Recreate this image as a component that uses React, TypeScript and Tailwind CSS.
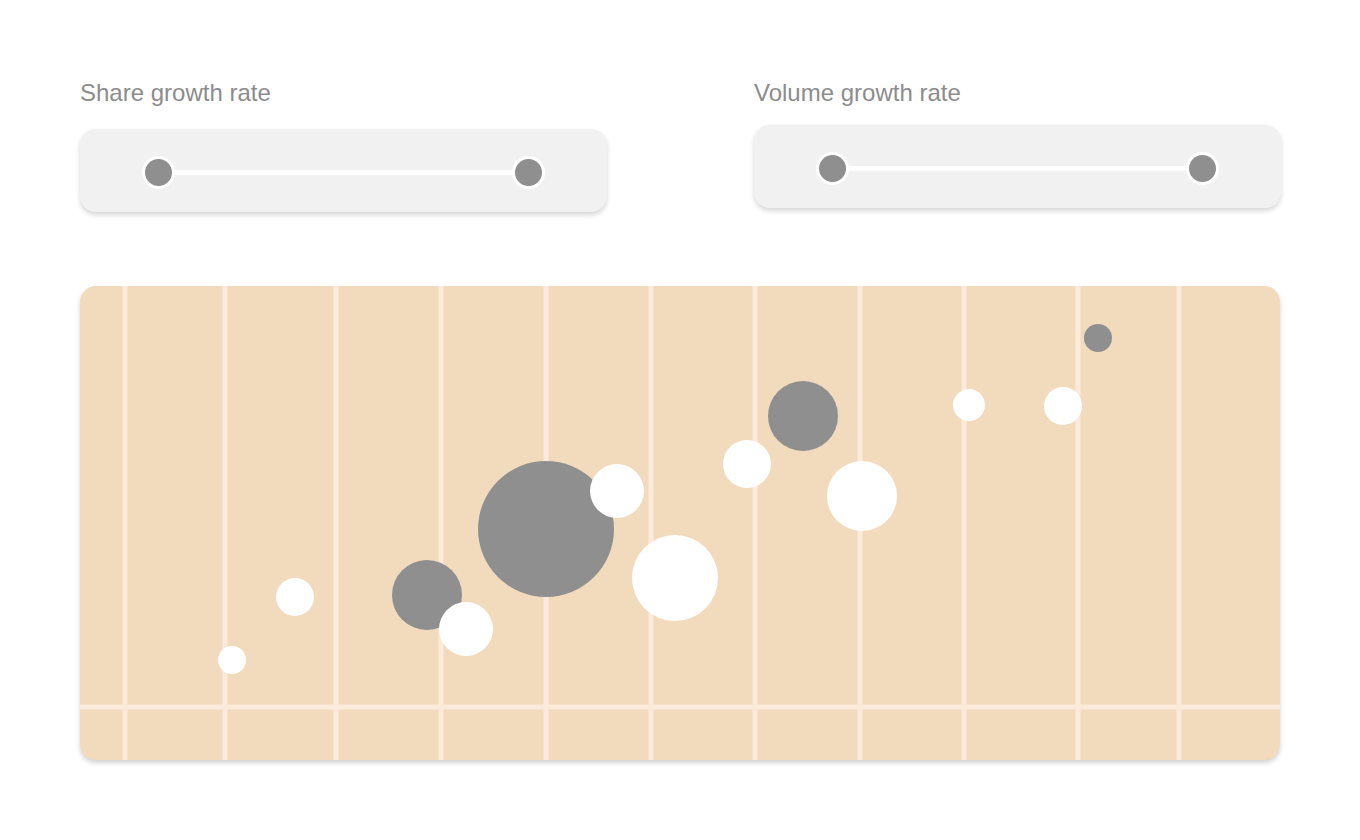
import React from "react";

const circles: { x: number; y: number; r: number; c: "g" | "w" }[] = [
  { x: 232, y: 660, r: 14, c: "w" },
  { x: 295, y: 597, r: 19, c: "w" },
  { x: 427, y: 595, r: 35, c: "g" },
  { x: 466, y: 629, r: 27, c: "w" },
  { x: 546, y: 529, r: 68, c: "g" },
  { x: 617, y: 491, r: 27, c: "w" },
  { x: 675, y: 578, r: 43, c: "w" },
  { x: 747, y: 464, r: 24, c: "w" },
  { x: 803, y: 416, r: 35, c: "g" },
  { x: 862, y: 496, r: 35, c: "w" },
  { x: 969, y: 405, r: 16, c: "w" },
  { x: 1063, y: 406, r: 19, c: "w" },
  { x: 1098, y: 338, r: 14, c: "g" },
];

const vLines = [125, 225, 336, 441, 546, 651, 755, 860, 964, 1078, 1179];

function Knob() {
  return (
    <div className="w-[33px] h-[33px] rounded-full bg-white flex items-center justify-center shrink-0">
      <div className="w-[27px] h-[27px] rounded-full bg-[#8f8f8f]" />
    </div>
  );
}

function RangeCard({ label, gapClass }: { label: string; gapClass: string }) {
  return (
    <div className="w-[527px] flex flex-col">
      <div
        className={`text-[24px] leading-[28px] text-[#8c8c8c] ${gapClass}`}
        style={{ fontFamily: '"Liberation Sans", Arial, sans-serif' }}
      >
        {label}
      </div>
      <div className="h-[83px] rounded-[16px] bg-[#f1f1f1] shadow-[0_3px_5px_rgba(0,0,0,0.16)] flex items-center px-[62px] pt-[3px]">
        <Knob />
        <div className="flex-1 h-[5px] bg-white -mx-[2px]" />
        <Knob />
      </div>
    </div>
  );
}

export default function App() {
  return (
    <div className="w-[1360px] h-[840px] bg-white pl-[80px] pt-[79px]">
      <div className="w-[1201px] flex justify-between items-start">
        <RangeCard label="Share growth rate" gapClass="mb-[22px]" />
        <RangeCard label="Volume growth rate" gapClass="mb-[18px]" />
      </div>
      <div className="mt-[74px] w-[1200px] h-[474px] rounded-[16px] bg-[#f2dabd] shadow-[0_3px_5px_rgba(0,0,0,0.18)] overflow-hidden">
        <svg width="1200" height="474" viewBox="80 286 1200 474" className="block">
          {vLines.map((x) => (
            <line key={x} x1={x} y1={286} x2={x} y2={760} stroke="#fcebdb" strokeWidth={5} />
          ))}
          <line x1={80} y1={707} x2={1280} y2={707} stroke="#fcebdb" strokeWidth={5} />
          {circles.map((c, i) => (
            <circle key={i} cx={c.x} cy={c.y} r={c.r} fill={c.c === "g" ? "#8f8f8f" : "#ffffff"} />
          ))}
        </svg>
      </div>
    </div>
  );
}
